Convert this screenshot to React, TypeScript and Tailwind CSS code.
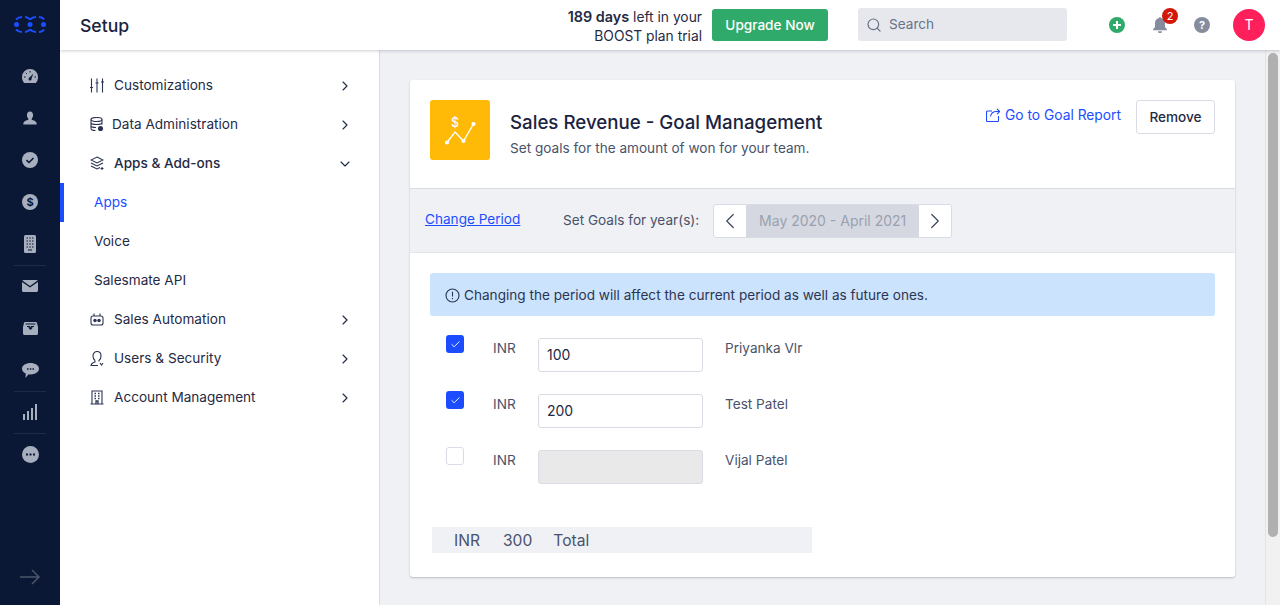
import { ChevronDown, ChevronLeft, ChevronRight, Search, Check } from "lucide-react";
import type { ReactNode } from "react";

const font = "font-['Inter',sans-serif]";

function RailIcon({ children }: { children: ReactNode }) {
  return <div className="h-[42px] w-full flex items-center justify-center">{children}</div>;
}

function Rail() {
  return (
    <div className="w-[60px] h-full shrink-0 bg-[#0a1735] flex flex-col items-center">
      <svg className="mt-[16px] mb-[22px]" width="34" height="17" viewBox="0 0 34 17" fill="none" stroke="#1b4dff" strokeWidth="2">
        <path d="M3 3.500C5 1.500 7 1 9 1M12 1c2 0 3.500 1 5 2.500M17 3.500C19 1.500 21 1 23 1M26 1c2 0 4 1 5 2.500" />
        <path d="M3 13.500C5 15.500 7 16 9 16M12 16c2 0 3.500-1 5-2.500M17 13.500c2 2 4 2.500 6 2.500M26 16c2 0 4-1 5-2.500" />
        <circle cx="3.500" cy="8.500" r="2.500" fill="#1b4dff" stroke="none" />
        <circle cx="17" cy="8.500" r="2.500" fill="#1b4dff" stroke="none" />
        <circle cx="30.500" cy="8.500" r="2.500" fill="#1b4dff" stroke="none" />
      </svg>
      <RailIcon>
        <svg width="16" height="14" viewBox="0 0 16 14">
          <path d="M8 0a8 8 0 0 0-8 8c0 2.300.8 4.400 2.200 6h11.600a8 8 0 0 0 2.200-6 8 8 0 0 0-8-8z" fill="#a7aebd" />
          <path d="M7 9l4.500-4.500L9 10.500z" fill="#0a1735" />
          <circle cx="8" cy="10" r="1.500" fill="#0a1735" />
          <path d="M2 8h1.500M12.500 8H14M3.800 3.800l1 1M8 2v1.500" stroke="#0a1735" strokeWidth="1" />
        </svg>
      </RailIcon>
      <RailIcon>
        <svg width="14" height="14" viewBox="0 0 15 14">
          <path d="M7.500 0c2.200 0 3.300 1.700 3.300 3.700 0 1.800-.8 3.200-1.500 4v1.200c1.800.7 4.700 1.300 5.200 3.300l.2 1.800H.3l.2-1.800c.5-2 3.400-2.600 5.200-3.300V7.700C5 6.900 4.200 5.500 4.200 3.700 4.200 1.700 5.300 0 7.500 0z" fill="#a7aebd" />
        </svg>
      </RailIcon>
      <RailIcon>
        <svg width="16" height="16" viewBox="0 0 16 16">
          <circle cx="8" cy="8" r="8" fill="#a7aebd" />
          <path d="M4.500 8.200l2.500 2.300 4.500-4.500" stroke="#0a1735" strokeWidth="1.600" fill="none" />
        </svg>
      </RailIcon>
      <RailIcon>
        <div className="w-4 h-4 rounded-full bg-[#a7aebd] flex items-center justify-center text-[11px] leading-none font-bold text-[#0a1735]">$</div>
      </RailIcon>
      <RailIcon>
        <svg width="12" height="18" viewBox="0 0 12 18">
          <rect width="12" height="18" rx="1.500" fill="#a7aebd" />
          <path d="M2.500 3h1.500M5.300 3h1.500M8 3h1.500M2.500 6h1.500M5.300 6h1.500M8 6h1.500M2.500 9h1.500M5.300 9h1.500M8 9h1.500M2.500 12h1.500M5.300 12h1.500M8 12h1.500M4 15h4" stroke="#0a1735" strokeWidth="1.200" />
        </svg>
      </RailIcon>
      <div className="w-8 h-px bg-[#1f2a47] -mb-px" />
      <RailIcon>
        <svg width="16" height="12" viewBox="0 0 16 12">
          <path d="M1.500 0h13c.5 0 1 .2 1.200.5L8 6 .3.500C.5.200 1 0 1.500 0zM0 2l8 5.500L16 2v8.500c0 .8-.7 1.500-1.500 1.500h-13C.7 12 0 11.300 0 10.500z" fill="#a7aebd" />
        </svg>
      </RailIcon>
      <RailIcon>
        <svg width="15" height="13" viewBox="0 0 15 13">
          <path d="M2 0h11c.5 0 .9.400 1 .9L15 5v6.500c0 .8-.7 1.500-1.500 1.500h-12C.7 13 0 12.300 0 11.500V5L1 .9C1.100.4 1.500 0 2 0z" fill="#a7aebd" />
          <path d="M2.500 2h10M4 4.500h2.500l.6 1.500h.8l.6-1.500H11" stroke="#0a1735" strokeWidth="1.100" fill="none" />
          <path d="M5 5.500h5L7.500 8z" fill="#0a1735" />
        </svg>
      </RailIcon>
      <RailIcon>
        <svg width="17" height="15" viewBox="0 0 17 15">
          <path d="M8.500 0C13 0 17 2.300 17 5.700s-3.800 5.700-8.500 5.700c-.7 0-1.400 0-2-.2L3.500 15l.3-4.500C1.500 9.500 0 7.800 0 5.700 0 2.300 4 0 8.500 0z" fill="#a7aebd" />
          <path d="M5 6h1.500M7.800 6h1.500M10.500 6H12" stroke="#0a1735" strokeWidth="1.500" />
        </svg>
      </RailIcon>
      <div className="w-8 h-px bg-[#1f2a47] -mb-px" />
      <RailIcon>
        <svg width="14" height="16" viewBox="0 0 14 16" fill="#a7aebd">
          <rect x="0" y="10" width="2" height="6" />
          <rect x="4" y="7" width="2" height="9" />
          <rect x="8" y="4" width="2" height="12" />
          <rect x="12" y="0" width="2" height="16" />
        </svg>
      </RailIcon>
      <div className="w-8 h-px bg-[#1f2a47] -mb-px" />
      <RailIcon>
        <svg width="17" height="17" viewBox="0 0 17 17">
          <circle cx="8.500" cy="8.500" r="8.500" fill="#a7aebd" />
          <path d="M4 8.500h2M7.500 8.500h2M11 8.500h2" stroke="#0a1735" strokeWidth="2" />
        </svg>
      </RailIcon>
      <svg className="mt-auto mb-[19px]" width="20" height="18" viewBox="0 0 20 18" fill="none" stroke="#4c5569" strokeWidth="1.500">
        <path d="M0 9h19M12 2l7 7-7 7" />
      </svg>
    </div>
  );
}

function Header() {
  return (
    <div className="h-[50px] shrink-0 bg-white flex items-center shadow-[0_1px_3px_rgba(30,40,70,0.22)] relative z-10">
      <div className="ml-5 mt-[2px] text-[17.6px] font-medium text-[#1a2340]">Setup</div>
      <div className="ml-auto mt-[3px] text-right text-[13.8px] leading-[19px] text-[#1f2a44]">
        <div><span className="text-[14.4px] font-semibold">189 days</span> left in your</div>
        <div>BOOST plan trial</div>
      </div>
      <button className="ml-[10px] h-8 w-[116px] rounded-[3px] bg-[#2faa6a] text-white text-[13.6px] font-medium">Upgrade Now</button>
      <div className="ml-[30px] w-[209px] h-[33px] -mt-px rounded-[3px] bg-[#e6e8ee] flex items-center pl-2 text-[13.6px] text-[#6b7386]">
        <Search size={16} strokeWidth={1.8} className="text-[#6b7386]" />
        <span className="ml-[7px]">Search</span>
      </div>
      <div className="ml-[42px] w-4 h-4 rounded-full bg-[#2faa6a] flex items-center justify-center">
        <svg width="8" height="8" viewBox="0 0 8 8"><path d="M4 0v8M0 4h8" stroke="#fff" strokeWidth="2" /></svg>
      </div>
      <div className="ml-[27px] relative w-4 h-4">
        <svg width="16" height="16" viewBox="0 0 16 16" fill="#858c9e">
          <path d="M8 0a1 1 0 0 1 1 1c2.500.5 4 2.600 4 5v4l2 2.500v.7H1v-.7L3 10V6c0-2.400 1.500-4.500 4-5a1 1 0 0 1 1-1zM6 14.300h4a2 2 0 0 1-4 0z" />
        </svg>
        <div className="absolute left-[10px] -top-[9px] w-4 h-4 rounded-full bg-[#d1180b] text-white text-[11px] leading-4 text-center">2</div>
      </div>
      <div className="ml-[26px] w-4 h-4 rounded-full bg-[#858c9e] text-white text-[11px] leading-4 text-center font-bold">?</div>
      <div className="ml-[23px] mr-[15px] w-8 h-8 rounded-full bg-[#ff1f5a] text-white text-[14px] leading-8 text-center">T</div>
    </div>
  );
}

function NavIcon({ children }: { children: ReactNode }) {
  return (
    <svg width="14" height="15" viewBox="0 0 14 15" fill="none" stroke="#2b3553" strokeWidth="1.100">
      {children}
    </svg>
  );
}

function NavRow({ icon, label, open, strong, gap = "ml-[10px]" }: { icon: ReactNode; label: string; open?: boolean; strong?: boolean; gap?: string }) {
  return (
    <div className="h-[39px] flex items-center pl-[30px] pr-[26px]">
      <span className="w-[14px] h-[15px] flex items-center justify-center">{icon}</span>
      <span className={`${gap} text-[13.6px] text-[#1f2a44] ${strong ? "font-medium" : ""}`}>{label}</span>
      <span className="ml-auto text-[#1f2a44]">
        {open ? <ChevronDown size={16} strokeWidth={1.7} /> : <ChevronRight size={16} strokeWidth={1.7} />}
      </span>
    </div>
  );
}

function SubRow({ label, active }: { label: string; active?: boolean }) {
  return (
    <div className={`h-[39px] flex items-center pl-[34px] text-[13.6px] relative ${active ? "text-[#1b4dff]" : "text-[#1f2a44]"}`}>
      {active && <span className="absolute left-0 top-0 h-[39px] w-1 bg-[#1b4dff]" />}
      {label}
    </div>
  );
}

function SideNav() {
  return (
    <div className="w-[320px] shrink-0 bg-white border-r border-[#d9dce4] pt-4">
      <NavRow
        label="Customizations"
        icon={
          <NavIcon>
            <path d="M1.500 0.500v14M7 0.500v14M12.500 0.500v14M0 9.500h3M5.500 5h3M11 4h3" />
          </NavIcon>
        }
      />
      <NavRow
        label="Data Administration"
        gap="ml-[8px]"
        icon={
          <NavIcon>
            <ellipse cx="6.500" cy="2.500" rx="5.500" ry="2" />
            <path d="M1 2.500v9c0 1.100 2 2 4.500 2M12 2.500v5M1 5.500c0 1.100 2.500 2 5.500 2s5.500-.9 5.500-2M1 8.500c0 1.100 2 2 5 2" />
            <circle cx="10.500" cy="11.500" r="2" fill="#2b3553" />
          </NavIcon>
        }
      />
      <NavRow
        label="Apps & Add-ons"
        open
        strong
        icon={
          <NavIcon>
            <path d="M7 1l6 3-6 3-6-3zM1 7l6 3 6-3M1 10l6 3 3-1.500M12 11v3M10.500 12.500h3" />
          </NavIcon>
        }
      />
      <SubRow label="Apps" active />
      <SubRow label="Voice" />
      <SubRow label="Salesmate API" />
      <NavRow
        label="Sales Automation"
        icon={
          <NavIcon>
            <rect x="1" y="4" width="12" height="9" rx="2" />
            <path d="M4 4V1.500M10 4V1.500" />
            <circle cx="5" cy="8.500" r="1.200" fill="#2b3553" />
            <circle cx="9" cy="8.500" r="1.200" fill="#2b3553" />
          </NavIcon>
        }
      />
      <NavRow
        label="Users & Security"
        icon={
          <NavIcon>
            <path d="M5 9.500C3.500 8.500 3 6.800 3 5c0-2.500 1.500-4.500 4-4.500s4 2 4 4.500c0 1.800-.5 3.500-2 4.500v1M5 9.500V11c-1.500.5-3.500 1-4 3.500h7M10 12l1.500 2 1.500-2" />
          </NavIcon>
        }
      />
      <NavRow
        label="Account Management"
        icon={
          <NavIcon>
            <path d="M2 14V1h10v13M0.500 14h13" />
            <path d="M4.500 3.500h1.500M8 3.500h1.500M4.500 6h1.500M8 6h1.500M4.500 8.500h1.500M8 8.500h1.500M6 14v-3h2v3" strokeWidth="1.300" />
          </NavIcon>
        }
      />
    </div>
  );
}

function GoalRow({ checked, name, value }: { checked: boolean; name: string; value: string }) {
  return (
    <div className="h-[56px] flex items-start">
      {checked ? (
        <span className="mt-[4px] ml-[16px] w-[18px] h-[18px] rounded-[3px] bg-[#1b4dff] flex items-center justify-center text-white">
          <Check size={11} strokeWidth={2} />
        </span>
      ) : (
        <span className="mt-[4px] ml-[16px] w-[18px] h-[18px] rounded-[3px] bg-white border border-[#d9dce4]" />
      )}
      <span className="ml-[29px] mt-[7px] w-[45px] text-[13.6px] leading-[20px] text-[#49526b]">INR</span>
      {checked ? (
        <div className="w-[165px] h-[34px] mt-[7px] rounded-[3px] border border-[#d9dce4] bg-white pl-2 text-[14px] leading-[32px] text-[#1f2a44]">{value}</div>
      ) : (
        <div className="w-[165px] h-[34px] mt-[7px] rounded-[3px] border border-[#d9dce4] bg-[#e9e9e9]" />
      )}
      <span className="ml-[22px] mt-[7px] text-[13.6px] leading-[20px] text-[#49526b]">{name}</span>
    </div>
  );
}

function Card() {
  return (
    <div className="w-[825px] h-[497px] bg-white rounded-[3px] shadow-[0_1px_2px_rgba(30,40,70,0.25)] overflow-hidden">
      <div className="h-[109px] flex items-start px-5 pt-5 border-b border-[#d9dce4]">
        <div className="w-[60px] h-[60px] rounded-[3px] bg-[#ffb907]">
          <svg width="60" height="60" viewBox="0 0 60 60" fill="none" stroke="#fff" strokeWidth="1.400">
            <path d="M17 42.500L25 32l8.500 9 10-17" />
            <circle cx="17" cy="42.500" r="1.400" fill="#fff" />
            <circle cx="33.500" cy="41" r="1.400" fill="#fff" />
            <circle cx="43.500" cy="24" r="1.400" fill="#fff" />
            <text x="25" y="27" fontSize="12.500" fontWeight="500" textAnchor="middle" fill="#fff" stroke="none">$</text>
          </svg>
        </div>
        <div className="ml-5">
          <div className="mt-[9px] text-[18.7px] leading-[28px] font-medium text-[#1a2340]">Sales Revenue - Goal Management</div>
          <div className="mt-px text-[13.6px] leading-[20px] text-[#49526b]">Set goals for the amount of won for your team.</div>
        </div>
        <div className="ml-auto flex items-start">
          <div className="mt-[5px] flex items-center text-[13.8px] leading-[20px] text-[#1b4dff]">
            <svg className="mr-[5px]" width="14" height="14" viewBox="0 0 14 14" fill="none" stroke="#1b4dff" strokeWidth="1.100">
              <path d="M6 3H1.500a1 1 0 0 0-1 1v8.500a1 1 0 0 0 1 1h10a1 1 0 0 0 1-1V8" />
              <path d="M4.500 8.500C5 5.500 7.500 3.500 10.500 3.500h3M11 .8l2.700 2.700L11 6.200" />
            </svg>
            Go to Goal Report
          </div>
          <button className="ml-[15px] w-[79px] h-[34px] rounded-[3px] border border-[#d9dce4] bg-white text-[13.6px] font-medium text-[#1f2a44]">Remove</button>
        </div>
      </div>
      <div className="h-[64px] bg-[#eff1f5] flex items-center pl-[15px] border-b border-[#e3e5eb]">
        <span className="w-[95px] -mt-[3px] whitespace-nowrap text-[13.6px] text-[#1b4dff] underline">Change Period</span>
        <span className="ml-[43px] -mt-px whitespace-nowrap text-[13.6px] text-[#49526b]">Set Goals for year(s):</span>
        <div className="ml-[14px] h-[34px] w-[239px] rounded-[3px] border border-[#d9dce4] bg-white flex items-center overflow-hidden">
          <span className="w-[32px] flex justify-center text-[#3b4560]"><ChevronLeft size={26} strokeWidth={1.1} /></span>
          <span className="w-[173px] h-full bg-[#d5d8e0] text-center text-[14px] leading-[32px] text-[#9aa1b1]">May 2020 - April 2021</span>
          <span className="w-[32px] flex justify-center text-[#3b4560]"><ChevronRight size={26} strokeWidth={1.1} /></span>
        </div>
      </div>
      <div className="px-5 pt-5">
        <div className="h-[43px] rounded-[3px] bg-[#cce3fd] flex items-center pl-[15px] pt-[2px] text-[13.6px] text-[#2b3553]">
          <svg className="mr-1" width="15" height="15" viewBox="0 0 15 15" fill="none" stroke="#2b3553" strokeWidth="1.100">
            <circle cx="7.500" cy="7.500" r="6.500" />
            <path d="M7.500 3.800v4.700M7.500 10v1.200" />
          </svg>
          Changing the period will affect the current period as well as future ones.
        </div>
        <div className="mt-[15px]">
          <GoalRow checked name="Priyanka Vlr" value="100" />
          <GoalRow checked name="Test Patel" value="200" />
          <GoalRow checked={false} name="Vijal Patel" value="" />
        </div>
        <div className="mt-[28px] ml-[2px] w-[380px] h-[26px] bg-[#eff1f5] flex items-center pl-[22px] pt-[2px] text-[15.6px] text-[#49526b]">
          <span>INR</span>
          <span className="ml-[23px]">300</span>
          <span className="ml-[21px]">Total</span>
        </div>
      </div>
    </div>
  );
}

export default function App() {
  return (
    <div className={`${font} w-[1280px] h-[605px] overflow-hidden flex bg-[#eff1f5]`}>
      <Rail />
      <div className="flex-1 flex flex-col min-w-0">
        <Header />
        <div className="flex-1 flex min-h-0">
          <SideNav />
          <div className="flex-1 pl-[30px] pt-[30px] min-w-0">
            <Card />
          </div>
          <div className="w-[15px] shrink-0 bg-[#f1f1f1] border-l border-[#e3e3e3] pl-[2px] pr-[2px] pt-[3px]">
            <div className="w-[10px] h-[484px] rounded-[5px] bg-[#b0b0b0]" />
          </div>
        </div>
      </div>
    </div>
  );
}
